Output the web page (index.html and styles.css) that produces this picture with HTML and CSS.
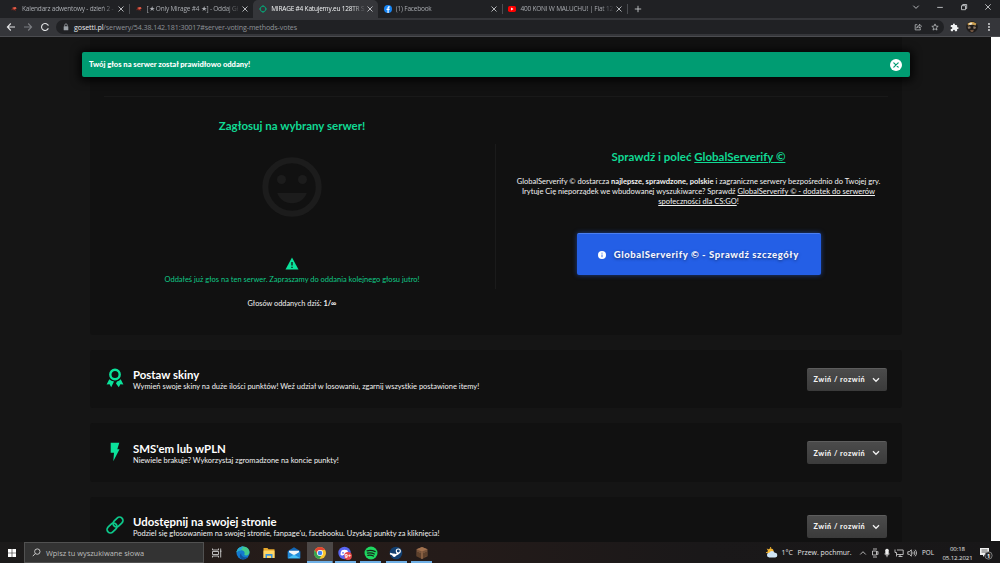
FILE: index.html
```
<!DOCTYPE html>
<html lang="pl">
<head>
    <meta charset="UTF-8">
    <meta name="viewport" content="width=device-width, initial-scale=1.0">
    <title>MIRAGE #4 Katujemy.eu 128TR</title>
    <link rel="stylesheet" href="styles.css">
</head>
<body>
    <!-- Pasek kart -->
    <div class="tab-bar">
        <div class="tab">
            <svg class="favicon" viewBox="0 0 16 16"><path d="M2 11l3-6 6-1 3 3-3 1 1 4-4-2-2 1-1-2z" fill="#7d2a20"/><path d="M5 5.500l6-1.500 2 2.500-4 2.500z" fill="#e8604c"/></svg>
            <span class="tab-title">Kalendarz adwentowy - dzień 2 -</span>
            <svg class="tab-close" viewBox="0 0 8 8"><path d="M1.500 1.500l5 5M6.500 1.500l-5 5"/></svg>
        </div>
        <div class="tab divided">
            <svg class="favicon" viewBox="0 0 16 16"><path d="M2 11l3-6 6-1 3 3-3 1 1 4-4-2-2 1-1-2z" fill="#7d2a20"/><path d="M5 5.500l6-1.500 2 2.500-4 2.500z" fill="#e8604c"/></svg>
            <span class="tab-title">[★ Only Mirage #4 ★] - Oddaj Gł</span>
            <svg class="tab-close" viewBox="0 0 8 8"><path d="M1.500 1.500l5 5M6.500 1.500l-5 5"/></svg>
        </div>
        <div class="tab active">
            <svg class="favicon" viewBox="0 0 16 16"><circle cx="8" cy="8" r="5.600" fill="none" stroke="#0b9c72" stroke-width="2"/><path d="M8 0v4M8 12v4M0 8h4M12 8h4" stroke="#0b9c72" stroke-width="2"/></svg>
            <span class="tab-title">MIRAGE #4 Katujemy.eu 128TR S</span>
            <svg class="tab-close" viewBox="0 0 8 8"><path d="M1.500 1.500l5 5M6.500 1.500l-5 5"/></svg>
        </div>
        <div class="tab">
            <svg class="favicon" viewBox="0 0 16 16"><circle cx="8" cy="8" r="8" fill="#1685f5"/><path d="M7 16v-6H5V7.500h2V6c0-2.200 1.200-3.300 3.200-3.300h1.300V5h-1c-.9 0-1.200.5-1.200 1.200v1.300h2.200L11 10H9.300v6z" fill="#fff"/></svg>
            <span class="tab-title">(1) Facebook</span>
            <svg class="tab-close" viewBox="0 0 8 8"><path d="M1.500 1.500l5 5M6.500 1.500l-5 5"/></svg>
        </div>
        <div class="tab divided">
            <svg class="favicon" viewBox="0 0 16 16"><rect y="2" width="16" height="12" rx="3.500" fill="#f00"/><path d="M6.300 5.200v5.600L11 8z" fill="#fff"/></svg>
            <span class="tab-title">400 KONI W MALUCHU! | Fiat 12</span>
            <svg class="tab-close" viewBox="0 0 8 8"><path d="M1.500 1.500l5 5M6.500 1.500l-5 5"/></svg>
        </div>
        <div class="new-tab">
            <svg viewBox="0 0 8 8"><path d="M4 .8v6.400M.8 4h6.400"/></svg>
        </div>
        <div class="window-controls">
            <svg viewBox="0 0 8 8"><path d="M1.300 2.700L4 5.400l2.700-2.700"/></svg>
            <svg viewBox="0 0 8 8"><path d="M1.200 4.400h5.600"/></svg>
            <svg viewBox="0 0 8 8"><path d="M1.500 2.700h4v4h-4zM2.700 2.700V1.500h4v4H5.500"/></svg>
            <svg viewBox="0 0 8 8"><path d="M1.300 1.300l5.400 5.400M6.700 1.300L1.300 6.700"/></svg>
        </div>
    </div>

    <!-- Pasek adresu -->
    <div class="toolbar">
        <div class="nav-buttons">
            <svg viewBox="0 0 10 10"><path d="M9 5H1.500M4.800 1.500L1.400 5l3.400 3.500" stroke="#e3e4e6"/></svg>
            <svg viewBox="0 0 10 10"><path d="M1 5h7.500M5.200 1.500L8.600 5 5.200 8.500" stroke="#7b7d81"/></svg>
            <svg viewBox="0 0 10 10"><path d="M8.300 6.200A3.500 3.500 0 1 1 7.600 2.600L8.500 3.500" stroke="#e3e4e6"/><path d="M8.800 1v3H5.800z" fill="#e3e4e6"/></svg>
        </div>
        <div class="omnibox">
            <svg class="lock" viewBox="0 0 6 8"><rect x=".7" y="3.200" width="4.600" height="4" rx=".5" fill="#9aa0a6"/><path d="M1.700 3.500V2.200a1.300 1.300 0 0 1 2.600 0v1.300" fill="none" stroke="#9aa0a6" stroke-width=".8"/></svg>
            <span class="url"><b>gosetti.pl</b>/serwery/54.38.142.181:30017#server-voting-methods-votes</span>
            <svg class="omni-icon" viewBox="0 0 8 8"><path d="M3.300 1.700H1.200v5.200h5.200V5.400M2.700 5.200c.1-1.800 1.200-2.600 2.800-2.600V1.200l2 2-2 2V3.900c-1.300 0-2.200.3-2.800 1.300z"/></svg>
            <svg class="omni-icon" viewBox="0 0 8 8"><path d="M4 .9l.9 2.200 2.300.2-1.800 1.500.6 2.300-2-1.300-2 1.300.6-2.300L.8 3.300l2.300-.2z"/></svg>
        </div>
        <svg class="puzzle" viewBox="0 0 24 24"><path d="M20.500 11H19V7a2 2 0 0 0-2-2h-4V3.500a2.500 2.500 0 0 0-5 0V5H4a2 2 0 0 0-2 2v3.800h1.500a2.700 2.700 0 0 1 0 5.400H2V20a2 2 0 0 0 2 2h3.800v-1.500a2.700 2.700 0 0 1 5.400 0V22H17a2 2 0 0 0 2-2v-4h1.500a2.500 2.500 0 0 0 0-5z" fill="#f1f3f4"/></svg>
        <svg class="avatar" viewBox="0 0 12 12"><circle cx="6" cy="6" r="5.800" fill="#1f1c1b"/><path d="M1.500 2.700C4 .3 8 .3 10.500 2.700L9.500 4.500 6 3.500 2 4.500z" fill="#c99d4e"/><path d="M2.700 2.500l2.600-1 1.500 1.700-3 .8z" fill="#eee5d2"/><path d="M1.500 5.800l2.700-.5.500 2-2.200.7zM7.500 5.300l2.500.7-.8 2-2-.5z" fill="#8d7a67"/><path d="M4 9l4-.3-1 2.300H5z" fill="#70533f"/></svg>
        <svg class="menu-dots" viewBox="0 0 4 10"><g fill="#e3e4e6"><circle cx="2" cy="2" r=".9"/><circle cx="2" cy="5" r=".9"/><circle cx="2" cy="8" r=".9"/></g></svg>
    </div>

    <div class="viewport">
        <main class="page">
            <div class="alert">
                <span>Twój głos na serwer został prawidłowo oddany!</span>
                <svg viewBox="0 0 12 12"><circle cx="6" cy="6" r="6" fill="#fff"/><path d="M3.800 3.800l4.400 4.400M8.200 3.800L3.800 8.200" stroke="#009c72" stroke-width="1.200" stroke-linecap="round"/></svg>
            </div>

            <section class="card vote">
                <div class="vote-left">
                    <h2>Zagłosuj na wybrany serwer!</h2>
                    <svg class="smile" viewBox="0 0 60 60"><circle cx="30" cy="30" r="26.700" fill="none" stroke="#1c1c1c" stroke-width="6"/><g fill="#1c1c1c"><circle cx="19.500" cy="22.500" r="4.500"/><circle cx="40.500" cy="22.500" r="4.500"/><path d="M15.200 36h29.600C42.500 42.300 37 46.300 30 46.300S17.500 42.300 15.200 36z"/></g></svg>
                    <svg class="warning" viewBox="0 0 14 13"><path d="M7 .5l6.500 12H.5z" fill="#0be39b"/><path d="M7 5v3.500M7 9.700v1.300" stroke="#111" stroke-width="1.300"/></svg>
                    <p class="voted">Oddałeś już głos na ten serwer. Zapraszamy do oddania kolejnego głosu jutro!</p>
                    <p class="count">Głosów oddanych dziś: <b>1/∞</b></p>
                </div>
                <div class="vote-right">
                    <h2>Sprawdź i poleć <a href="#">GlobalServerify ©</a></h2>
                    <p>GlobalServerify © dostarcza <b>najlepsze, sprawdzone, polskie</b> i zagraniczne serwery bezpośrednio do Twojej gry.<br>
                    Irytuje Cię nieporządek we wbudowanej wyszukiwarce? Sprawdź <a href="#">GlobalServerify © - dodatek do serwerów<br>
                    społeczności dla CS:GO</a>!</p>
                    <button class="btn-blue">
                        <svg viewBox="0 0 8 8"><circle cx="4" cy="4" r="4" fill="#fff"/><path d="M4 1.700v1M4 3.500v2.700" stroke="#245fe6" stroke-width=".9"/></svg>
                        <span>GlobalServerify © - Sprawdź szczegóły</span>
                    </button>
                </div>
            </section>

            <section class="card method">
                <svg class="method-icon" viewBox="0 0 18 20"><circle cx="9" cy="6.500" r="4.700" fill="none" stroke="#0be39b" stroke-width="2.400"/><path d="M3.300 11.200L.6 16.500l3-.2L5.200 19.300 8 13.600A8 8 0 0 1 3.300 11.200zM14.700 11.200l2.700 5.300-3-.2-1.600 3L10 15.500l1-2A8 8 0 0 0 14.700 11.200z" fill="#0be39b"/></svg>
                <div class="method-text">
                    <h3>Postaw skiny</h3>
                    <p>Wymień swoje skiny na duże ilości punktów! Weź udział w losowaniu, zgarnij wszystkie postawione itemy!</p>
                </div>
                <button class="btn-toggle"><span>Zwiń / rozwiń</span><svg viewBox="0 0 8 6"><path d="M1 1.300l3 3 3-3"/></svg></button>
            </section>

            <section class="card method">
                <svg class="method-icon" viewBox="0 0 18 20"><path d="M4.700.8h8.600l-2 6.400h2.200L7.300 19.200l.7-8.500H4.700z" fill="#0be39b"/></svg>
                <div class="method-text">
                    <h3>SMS'em lub wPLN</h3>
                    <p>Niewiele brakuje? Wykorzystaj zgromadzone na koncie punkty!</p>
                </div>
                <button class="btn-toggle"><span>Zwiń / rozwiń</span><svg viewBox="0 0 8 6"><path d="M1 1.300l3 3 3-3"/></svg></button>
            </section>

            <section class="card method">
                <svg class="method-icon" viewBox="0 0 18 20"><g fill="none" stroke="#0dc88b" stroke-width="1.700"><rect x="-5.600" y="-3.400" width="11.200" height="6.800" rx="3.400" transform="translate(12 7) rotate(-45)"/><rect x="-5.600" y="-3.400" width="11.200" height="6.800" rx="3.400" transform="translate(6 13) rotate(-45)"/></g></svg>
                <div class="method-text">
                    <h3>Udostępnij na swojej stronie</h3>
                    <p>Podziel się głosowaniem na swojej stronie, fanpage'u, facebooku. Uzyskaj punkty za kliknięcia!</p>
                </div>
                <button class="btn-toggle"><span>Zwiń / rozwiń</span><svg viewBox="0 0 8 6"><path d="M1 1.300l3 3 3-3"/></svg></button>
            </section>
        </main>
        <div class="scrollbar"></div>
    </div>

    <!-- Pasek zadań -->
    <div class="taskbar">
        <div class="start"><svg viewBox="0 0 8 8"><path d="M0 0h3.700v3.700H0zM4.300 0H8v3.700H4.300zM0 4.300h3.700V8H0zM4.300 4.300H8V8H4.300z" fill="#fff"/></svg></div>
        <div class="search">
            <svg viewBox="0 0 9 9"><circle cx="5.300" cy="3.600" r="2.700"/><path d="M3.300 5.500L.8 8.200"/></svg>
            <span>Wpisz tu wyszukiwane słowa</span>
        </div>
        <div class="task view"><svg viewBox="0 0 14 14"><path d="M2.500 2.500v1.500h6V2.500M2.500 11.500V10h6v1.500M2.500 5.500h6v3h-6zM10.700 2.500v9M10 5.200h1.500" fill="none" stroke="#ccc" stroke-width=".9"/></svg></div>
        <div class="task"><svg viewBox="0 0 14 14"><circle cx="7" cy="7" r="6.500" fill="#1379cf"/><path d="M.5 6.500C1 2.800 4 .5 7.300.5c3.700 0 6.200 2.800 6.200 5.700 0 2-1.500 3.200-3.500 3.200-1.500 0-2-.6-1.500-1.300C9.200 6 7.500 4.300 5 4.300c-2 0-3.700 1-4.500 2.200z" fill="#42c98e"/><path d="M.5 6.500C1 2.800 4 .5 7.300.5c-1 1.500-2 3-2.300 3.800-2 0-3.700 1-4.500 2.200z" fill="#27a9d8"/><path d="M5.200 7.200c-.5 2.600 2.500 5 6.600 3.800-1.600 1.800-3.700 2.500-5.500 2.300C3.500 12.500 3 8.500 5.200 7.200z" fill="#0f529c"/></svg></div>
        <div class="task"><svg viewBox="0 0 14 14"><path d="M1.500 2h4l1 1.300h6V12h-11z" fill="#e9a92c"/><path d="M1.500 4.600h11V12h-11z" fill="#ffd767"/><path d="M3.500 12V8h7v4H9V9.700H5V12z" fill="#3a92dc"/></svg></div>
        <div class="task"><svg viewBox="0 0 14 14"><path d="M.8 5L7 1.200 13.200 5v7.300H.8z" fill="#1467b5"/><path d="M2 4.800h10v3l-5 3-5-3z" fill="#f2f5f8"/><path d="M.8 5.500L7 9.200l6.200-3.700v6.800H.8z" fill="#2389d6"/><path d="M.8 12.300L7 8.500l6.200 3.800z" fill="#45bff5"/></svg></div>
        <div class="task open current"><svg viewBox="0 0 14 14"><circle cx="7" cy="7" r="6" fill="#f8c530"/><path d="M1.800 4a6 6 0 0 1 10.400 0H7a3 3 0 0 0-2.700 4.300z" fill="#e04434"/><path d="M1.800 4a6 6 0 0 0 4.600 9l2.500-4.300a3 3 0 0 1-4.500-.2z" fill="#35a352"/><circle cx="7" cy="7" r="3" fill="#fff"/><circle cx="7" cy="7" r="2.300" fill="#4285f4"/></svg></div>
        <div class="task open"><svg viewBox="0 0 14 14"><circle cx="6.500" cy="7" r="6.200" fill="#5865f2"/><path d="M3.800 4.300c1.800-.9 3.600-.9 5.400 0 1 1.500 1.400 3 1.200 4.600l-1.800.9-.6-.9H5l-.6.9-1.800-.9c-.2-1.600.2-3.100 1.200-4.600z" fill="#fff"/><circle cx="5" cy="6.900" r=".8" fill="#5865f2"/><circle cx="10" cy="10" r="3.900" fill="#e5484d"/><text x="10" y="12" class="badge">9+</text></svg></div>
        <div class="task open"><svg viewBox="0 0 14 14"><circle cx="7" cy="7" r="6.500" fill="#1ed760"/><path d="M3 4.900c2.800-.8 5.700-.5 8.200.7M3.400 7.200c2.400-.6 4.800-.4 6.900.8M3.800 9.400c2-.5 3.900-.3 5.600.7" fill="none" stroke="#17251c" stroke-width="1.200" stroke-linecap="round"/></svg></div>
        <div class="task open"><svg viewBox="0 0 14 14"><circle cx="7" cy="7" r="6.300" fill="#123f70"/><path d="M1 7.500l4.800 1.700 3-1.500 1.500-2.500" fill="none" stroke="#fff" stroke-width="1.800"/><circle cx="9.300" cy="5" r="2" fill="#123f70" stroke="#fff" stroke-width="1.100"/><circle cx="5.200" cy="9.300" r="1.700" fill="#fff"/></svg></div>
        <div class="task open"><svg viewBox="0 0 14 14"><path d="M7 1l5.500 2.300v6.900L7 13 1.500 10.200V3.300z" fill="#76523a"/><path d="M7 1l5.500 2.300L7 5.600 1.500 3.300z" fill="#a1714e"/><path d="M3 6v5M5 7v5M9 7v5M11 6v4.500" stroke="#47301f" stroke-width="1"/><path d="M7 5.600V13" stroke="#a1714e" stroke-width=".8"/></svg></div>

        <div class="tray">
            <svg class="weather" viewBox="0 0 13 12"><circle cx="5" cy="5" r="3.300" fill="#f7b733"/><path d="M5 0v2M1 2l1.500 1.300M0 6h2" stroke="#f7b733"/><path d="M3.500 11.300a2.500 2.500 0 0 1 0-5 3.300 3.300 0 0 1 6 0 2.500 2.500 0 0 1 .5 5z" fill="#cfe4f5"/></svg>
            <span class="temp">1°C</span>
            <span class="forecast">Przew. pochmur.</span>
            <svg class="tray-icon" viewBox="0 0 10 10"><path d="M2.200 6.500L5 3.700l2.800 2.800"/></svg>
            <svg class="tray-icon" viewBox="0 0 10 10"><path d="M3 1h4M2.500 3h4v4h-4zM6.500 4.300L8 3.500v3l-1.500-.8M3 9h4"/></svg>
            <svg class="tray-icon" viewBox="0 0 10 10"><rect x="3.300" y=".8" width="3.400" height="6" rx="1.500" fill="#eee"/><path d="M2.800 5.500c.3 2.500 4.100 2.500 4.400 0M5 7.500V9.200"/></svg>
            <svg class="tray-icon" viewBox="0 0 10 10"><path d="M3 2h6.200v4.500H3M1 1.500v3h1.500v4M4.500 8.500h4M6 6.500v2"/></svg>
            <svg class="tray-icon" viewBox="0 0 10 10"><path d="M.8 3.700h1.500L4.300 1.800v6.400L2.300 6.300H.8zM5.600 3.800c.6.800.6 1.600 0 2.400M6.900 2.700c1.200 1.500 1.200 3.100 0 4.600M8.200 1.700c1.700 2.100 1.700 4.500 0 6.600"/></svg>
            <span class="lang">POL</span>
            <div class="clock"><span>00:18</span><span>05.12.2021</span></div>
            <div class="notif">
                <svg viewBox="0 0 14 14"><path d="M1 2h9v7H5.500L4 11V9H1z" fill="#f0f0f0"/><path d="M2.500 4h6M2.500 6h6" stroke="#444" stroke-width=".8"/><circle cx="9.500" cy="9.500" r="3.700" fill="#2b2a2a" stroke="#9a9a9a" stroke-width=".7"/><text x="9.500" y="11.500" class="badge">1</text></svg>
            </div>
        </div>
    </div>
</body>
</html>
```
FILE: styles.css
```
* {
    box-sizing: border-box;
}

body {
    margin: 0;
    height: 563px;
    display: flex;
    flex-direction: column;
    overflow: hidden;
    background: #151515;
    color: #f2f2f2;
    font-family: Lato, 'Open Sans', sans-serif;
    white-space: nowrap;
}

h2, h3, p {
    margin: 0;
}

svg {
    display: block;
    flex: none;
}

button {
    font-family: inherit;
    padding: 0;
    border: none;
}

/* Karty przeglądarki */
.tab-bar {
    display: flex;
    align-items: stretch;
    height: 18px;
    padding-left: 4px;
    background: #202124;
    font-family: 'Open Sans', 'Noto Sans', sans-serif;
}

.tab {
    display: flex;
    align-items: center;
    width: 124.6px;
    padding: 0 4px 0 6px;
    color: #a9acb1;
    font-size: 6.5px;
    letter-spacing: -.2px;
}

.tab.active {
    background: #35363a;
    color: #f1f3f4;
    border-radius: 5px 5px 0 0;
}

.tab.divided {
    background: linear-gradient(#4a4c50, #4a4c50) 0 4px / 1px 10px no-repeat;
}

.favicon {
    width: 8px;
    height: 8px;
    margin-right: 4px;
}

.tab-title {
    flex: 1;
    line-height: 12px;
    mask-image: linear-gradient(to right, #000 84%, transparent);
}

.tab-close {
    width: 8px;
    height: 8px;
}

.tab-close path, .new-tab path, .window-controls path {
    fill: none;
    stroke: #c4c6c9;
    stroke-width: .9;
}

.new-tab {
    display: flex;
    align-items: center;
    padding-left: 7px;
    background: linear-gradient(#4a4c50, #4a4c50) 0 4px / 1px 10px no-repeat;
}

.new-tab svg {
    width: 8px;
}

.window-controls {
    display: flex;
    align-items: center;
    gap: 16px;
    margin-left: auto;
    padding: 0 8px 4px 0;
}

.window-controls svg {
    width: 8px;
}

/* Pasek adresu */
.toolbar {
    display: flex;
    align-items: center;
    height: 19px;
    padding: 0 7px 0 6px;
    background: #35363a;
    border-bottom: 1px solid #4b4c50;
}

.nav-buttons {
    display: flex;
    gap: 7px;
    width: 50px;
}

.nav-buttons svg {
    width: 10px;
}

.nav-buttons path {
    fill: none;
    stroke-width: 1.1;
}

.omnibox {
    display: flex;
    align-items: center;
    width: 888px;
    height: 14px;
    padding: 0 5px 0 7px;
    border-radius: 7px;
    background: #202124;
}

.lock {
    width: 6px;
    margin-right: 5px;
}

.url {
    flex: 1;
    color: #8f9398;
    font-family: 'Open Sans', 'Noto Sans', sans-serif;
    font-size: 7.1px;
    letter-spacing: -.1px;
}

.url b {
    color: #e8eaed;
    font-weight: 400;
}

.omni-icon {
    width: 8px;
    margin-left: 9px;
}

.omni-icon path {
    fill: none;
    stroke: #b8babd;
    stroke-width: .8;
}

.puzzle {
    width: 9px;
    margin-left: 6px;
}

.avatar {
    width: 12px;
    margin-left: 7px;
}

.menu-dots {
    width: 4px;
    margin-left: auto;
    margin-right: 2px;
}

/* Strona */
.viewport {
    display: flex;
    height: 505px;
    overflow: hidden;
}

.page {
    position: relative;
    width: 991px;
    padding: 0 88px 0 89.5px;
    background: #151515;
}

.scrollbar {
    flex: 1;
    height: 504px;
    background: #fff;
}

/* Komunikat nad treścią strony */
.alert {
    position: absolute;
    top: 14.5px;
    left: 82px;
    width: 828px;
    height: 25.500px;
    display: flex;
    align-items: center;
    justify-content: space-between;
    padding: 0 8px 0 7px;
    border-radius: 2px;
    background: #009c72;
    box-shadow: 0 1px 8px 3px rgba(0, 0, 0, .8);
    color: #fff;
    font-size: 7.6px;
    font-weight: 900;
}

.alert svg {
    width: 12px;
    margin-top: 1px;
}

.card {
    background: #111;
    border-radius: 3px;
    width: 812.5px;
    margin-bottom: 15px;
}

.vote {
    display: flex;
    height: 297.5px;
    padding: 0 14px;
    text-align: center;
    background: linear-gradient(#191919, #191919) 14px 59px / 784px 1px no-repeat #111;
    border-radius: 0 0 3px 3px;
}

.vote h2 {
    color: #10da94;
    font-size: 11.5px;
    line-height: 16px;
}

.vote a {
    color: inherit;
}

.vote p {
    font-size: 7.55px;
    line-height: 10px;
}

.vote-left {
    display: flex;
    flex-direction: column;
    align-items: center;
    width: 377px;
    padding-top: 81px;
}

.smile {
    width: 60px;
    height: 60px;
    margin-top: 23px;
}

.warning {
    width: 14px;
    height: 13px;
    margin-top: 40px;
}

.vote .voted {
    margin-top: 5px;
    color: #10c886;
    font-size: 7.5px;
}

.vote .count {
    margin-top: 14px;
    font-size: 7.35px;
}

.vote-right {
    display: flex;
    flex-direction: column;
    align-items: center;
    width: 407px;
    padding-top: 112px;
    background: linear-gradient(#1b1b1b, #1b1b1b) 14px 107px / 1px 145px no-repeat;
    padding-left: 29px;
}

.vote-right h2 {
    margin-bottom: 12px;
}

.btn-blue {
    display: flex;
    align-items: center;
    justify-content: center;
    gap: 7.5px;
    width: 244px;
    height: 42px;
    margin-top: 26px;
    border-top: 1px solid #4b7ff0;
    border-radius: 2px;
    background: #245fe6;
    box-shadow: 0 0 5px rgba(36, 95, 230, .6);
    color: #f4f6ff;
    font-size: 9.5px;
    font-weight: 900;
    letter-spacing: .58px;
    text-shadow: 0 1px 3px rgba(0, 0, 0, .5);
}

.btn-blue svg {
    width: 8px;
}

/* Metody głosowania */
.method {
    display: flex;
    align-items: center;
    height: 58.5px;
    padding: 1px 15px 0 16px;
}

.method-icon {
    width: 18px;
    height: 20px;
    margin-right: 9.5px;
    margin-top: -2px;
}

.method-text {
    flex: 1;
    padding-top: 2px;
}

.method h3 {
    color: #fff;
    font-size: 11.4px;
    line-height: 14px;
}

.method p {
    font-size: 7.48px;
    line-height: 10px;
}

.btn-toggle {
    display: flex;
    align-items: center;
    justify-content: space-between;
    width: 80.5px;
    height: 23px;
    padding: 0 7px;
    border-top: 1px solid #5d5d5d;
    border-radius: 2px;
    background: linear-gradient(#4b4b4b, #3b3b3b);
    color: #f2f2f2;
    font-size: 7.3px;
    font-weight: 900;
    letter-spacing: .5px;
}

.btn-toggle svg {
    width: 8px;
}

.btn-toggle path {
    fill: none;
    stroke: #f2f2f2;
    stroke-width: 1.3;
}

/* Pasek zadań */
.taskbar {
    display: flex;
    align-items: stretch;
    height: 21px;
    background: linear-gradient(to right, #1b1a1a, #261c19 30%, #241b19 45%, #1a1819 70%, #181718);
    font-family: 'Open Sans', 'Noto Sans', sans-serif;
    color: #e4e4e4;
}

.start {
    display: flex;
    align-items: center;
    width: 24px;
    padding-left: 8px;
}

.start svg {
    width: 8px;
}

.search {
    display: flex;
    align-items: center;
    width: 180px;
    padding-left: 7px;
    border: 1px solid #515151;
    background: #333;
    color: #bdbdbd;
    font-size: 7.4px;
}

.search svg {
    width: 9px;
    margin-right: 5px;
}

.search circle, .search path {
    fill: none;
    stroke: #d5d5d5;
    stroke-width: .9;
}

.task {
    display: flex;
    align-items: center;
    justify-content: center;
    width: 25.5px;
}

.task.view {
    width: 26.5px;
}

.task svg {
    width: 14px;
}

.task.open {
    background: linear-gradient(#6fb0e6, #6fb0e6) center bottom / 21px 2px no-repeat;
}

.task.current {
    background: linear-gradient(#6fb0e6, #6fb0e6) center bottom / 25.5px 2px no-repeat #4c4746;
}

.badge {
    fill: #fff;
    font-size: 5.5px;
    font-weight: 700;
    text-anchor: middle;
}

.tray {
    display: flex;
    align-items: center;
    margin-left: auto;
    font-size: 6.9px;
}

.weather {
    width: 12px;
    margin-right: 4px;
}

.temp {
    width: 16px;
}

.forecast {
    width: 60px;
}

.tray-icon {
    width: 10px;
    margin-right: 2.3px;
}

.tray-icon path {
    fill: none;
    stroke: #dcdcdc;
    stroke-width: .8;
}

.lang {
    width: 20px;
    padding-left: 3px;
    font-size: 6.3px;
}

.clock {
    display: flex;
    flex-direction: column;
    align-items: center;
    width: 37px;
    font-size: 6.1px;
    letter-spacing: -.1px;
    line-height: 9px;
}

.notif {
    width: 24px;
    padding-left: 3px;
}

.notif svg {
    width: 14px;
}
```
